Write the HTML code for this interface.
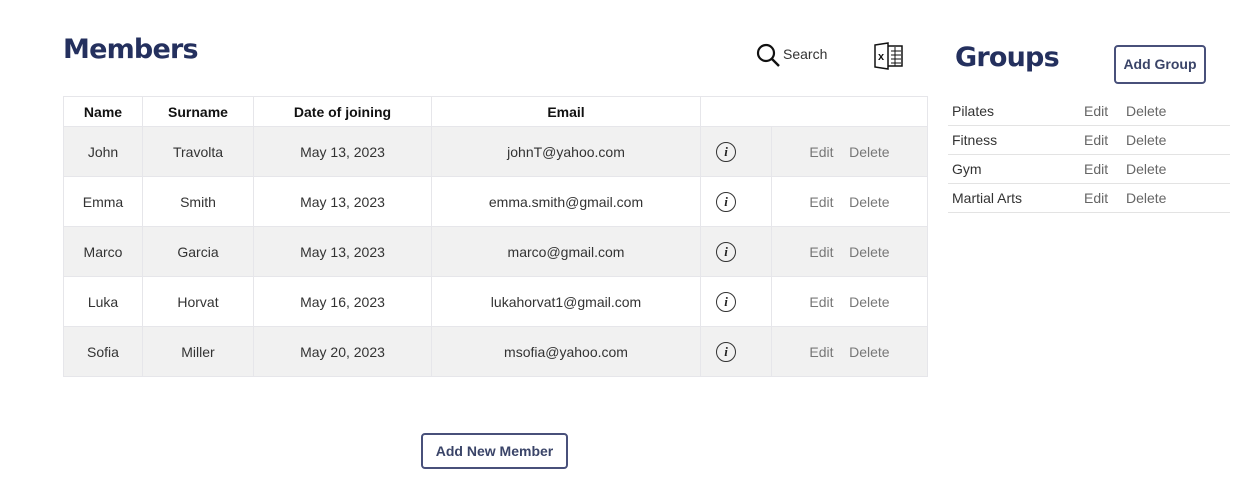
<!DOCTYPE html>
<html><head><style>
body{margin:0;width:1250px;height:488px;background:#fff;font-family:"Liberation Sans",sans-serif;position:relative;overflow:hidden}
.abs{position:absolute}
h1{position:absolute;margin:0;font-family:"DejaVu Sans","Liberation Sans",sans-serif;font-weight:bold;color:#24305e;letter-spacing:-0.8px}
table{position:absolute;left:63px;top:96px;border-collapse:collapse;font-size:14px;color:#333}
td,th{border:1px solid #e6e6ea;text-align:center;padding:0}
th{height:29px;font-weight:bold;color:#111;font-size:14px}
td{height:49px}
tr.g td{background:#f1f1f1}
.ed{color:#777}
.info{display:inline-block;width:18px;height:18px;border:1.6px solid #333;border-radius:50%;font:italic bold 13px "Liberation Serif",serif;line-height:18px;color:#222;vertical-align:middle;position:relative;left:-10px}
.btn{position:absolute;border:2px solid #48507a;border-radius:4px;color:#3a4468;font-weight:bold;font-size:14px;text-align:center;box-sizing:border-box;background:#fff}
.gr{position:absolute;left:948px;width:282px;height:29px;border-bottom:1px solid #e3e3e3;font-size:14px;color:#333;box-sizing:border-box}
.gr span{position:absolute;top:6px}
.gr .e{left:136px;color:#666}.gr .d{left:178px;color:#666}
</style></head><body>
<h1 style="left:63px;top:34px;font-size:27px">Members</h1>
<h1 style="left:955px;top:42px;font-size:27px">Groups</h1>
<svg class="abs" style="left:756px;top:43px" width="26" height="26" viewBox="0 0 26 26"><circle cx="10" cy="10" r="8" fill="none" stroke="#111" stroke-width="2.2"/><line x1="16" y1="16" x2="23" y2="23" stroke="#111" stroke-width="2.4"/></svg>
<div class="abs" style="left:783px;top:46px;font-size:14px;color:#333">Search</div>
<svg class="abs" style="left:873px;top:42px" width="32" height="28" viewBox="0 0 32 28"><rect x="10" y="4" width="19" height="20" fill="#fff" stroke="#111" stroke-width="1.5"/><g stroke="#111" stroke-width="1"><line x1="18" y1="9" x2="28" y2="9"/><line x1="18" y1="13" x2="28" y2="13"/><line x1="18" y1="17" x2="28" y2="17"/><line x1="18" y1="21" x2="28" y2="21"/><line x1="22" y1="5" x2="22" y2="24"/></g><path d="M2 3 L15 1 L15 27 L2 25 Z" fill="#fff" stroke="#111" stroke-width="1.5"/><text x="5" y="18" font-size="11" font-weight="bold" font-family="Liberation Sans" fill="#111">x</text></svg>
<div class="btn" style="left:1114px;top:45px;width:92px;height:39px;line-height:35px">Add Group</div>
<table>
<tr><th style="width:78px">Name</th><th style="width:110px">Surname</th><th style="width:177px">Date of joining</th><th style="width:268px">Email</th><th colspan="2" style="width:226px;border-left:1px solid #e6e6ea"></th></tr>
<tr class="g"><td>John</td><td>Travolta</td><td>May 13, 2023</td><td>johnT@yahoo.com</td><td style="width:70px"><span class="info">i</span></td><td class="ed">Edit &nbsp;&nbsp; Delete</td></tr>
<tr><td>Emma</td><td>Smith</td><td>May 13, 2023</td><td>emma.smith@gmail.com</td><td><span class="info">i</span></td><td class="ed">Edit &nbsp;&nbsp; Delete</td></tr>
<tr class="g"><td>Marco</td><td>Garcia</td><td>May 13, 2023</td><td>marco@gmail.com</td><td><span class="info">i</span></td><td class="ed">Edit &nbsp;&nbsp; Delete</td></tr>
<tr><td>Luka</td><td>Horvat</td><td>May 16, 2023</td><td>lukahorvat1@gmail.com</td><td><span class="info">i</span></td><td class="ed">Edit &nbsp;&nbsp; Delete</td></tr>
<tr class="g"><td>Sofia</td><td>Miller</td><td>May 20, 2023</td><td>msofia@yahoo.com</td><td><span class="info">i</span></td><td class="ed">Edit &nbsp;&nbsp; Delete</td></tr>
</table>
<div class="gr" style="top:97px"><span style="left:4px">Pilates</span><span class="e">Edit</span><span class="d">Delete</span></div>
<div class="gr" style="top:126px"><span style="left:4px">Fitness</span><span class="e">Edit</span><span class="d">Delete</span></div>
<div class="gr" style="top:155px"><span style="left:4px">Gym</span><span class="e">Edit</span><span class="d">Delete</span></div>
<div class="gr" style="top:184px"><span style="left:4px">Martial Arts</span><span class="e">Edit</span><span class="d">Delete</span></div>
<div class="btn" style="left:421px;top:433px;width:147px;height:36px;line-height:32px">Add New Member</div>
</body></html>
